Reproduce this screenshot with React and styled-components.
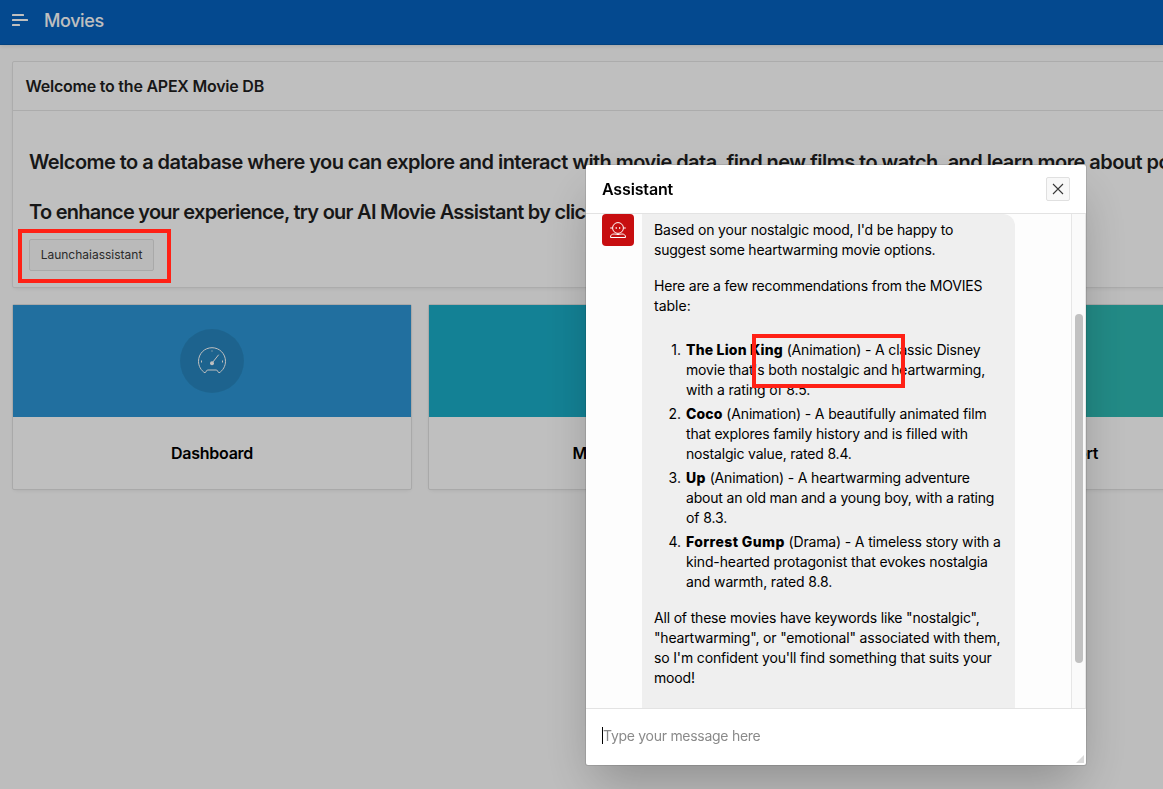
import React from "react";
import styled, { createGlobalStyle } from "styled-components";

const GlobalStyle = createGlobalStyle`
  * { box-sizing: border-box; }
  html, body, #root { height: 100%; }
  body {
    margin: 0;
    overflow: hidden;
    background: #fcfcfc;
    color: #1f1f1f;
    font-family: Inter, "Liberation Sans", sans-serif;
    font-size: 14px;
    line-height: 20px;
  }
  h1, h2, h3, p, ol { margin: 0; padding: 0; font: inherit; }
`;

const Page = styled.div`
  height: 100%;
  overflow: hidden;
`;

const TopBar = styled.header`
  display: flex;
  align-items: center;
  gap: 16px;
  height: 45px;
  padding: 0 12px 4px;
  background: #0662bf;
  border-bottom: 1px solid #0558ab;
  box-shadow: 0 1px 4px rgba(0, 0, 0, 0.12);
  color: #fff;
`;

const AppTitle = styled.h1`
  padding-top: 2px;
  font-size: 18px;
  font-weight: 500;
  letter-spacing: -0.4px;
`;

const Content = styled.main`
  display: flex;
  flex-direction: column;
  gap: 16px;
  width: 1264px;
  padding: 16px 12px;
`;

const Region = styled.section`
  height: 227px;
  border: 1px solid #e6e6e6;
  border-radius: 2px;
  background: #fff;
  box-shadow: 0 2px 4px -2px rgba(0, 0, 0, 0.1);
`;

const RegionHeader = styled.h2`
  height: 49px;
  padding: 0 12.5px;
  border-bottom: 1px solid #e6e6e6;
  font-size: 16px;
  font-weight: 600;
  line-height: 49px;
  letter-spacing: -0.23px;
`;

const RegionBody = styled.div`
  padding: 26px 16px 0;
`;

const Headline = styled.h3`
  font-size: 20px;
  font-weight: 600;
  line-height: 50px;
  white-space: nowrap;
  letter-spacing: ${(p) => p.$tracking}px;
`;

const LaunchButton = styled.button`
  display: block;
  width: 125px;
  height: 32px;
  margin-top: 2px;
  padding: 0 0 2px;
  border: 1px solid #e2e2e2;
  border-radius: 2px;
  background: #f8f8f8;
  color: #383838;
  font: 400 12px Inter, "Liberation Sans", sans-serif;
`;

const Cards = styled.div`
  display: grid;
  grid-template-columns: repeat(3, 400px);
  gap: 16px;
`;

const Card = styled.article`
  border: 1px solid #e2e2e2;
  border-radius: 2px;
  background: #fff;
  box-shadow: 0 2px 4px -2px rgba(0, 0, 0, 0.1);
`;

const CardBanner = styled.div`
  display: grid;
  place-items: center;
  height: 112px;
  background: ${(p) => p.$color};
`;

const IconDisc = styled.div`
  display: grid;
  place-items: center;
  width: 64px;
  height: 64px;
  border-radius: 50%;
  background: rgba(0, 0, 0, 0.1);
  color: #fff;
`;

const CardTitle = styled.h3`
  height: 72px;
  color: #000;
  font-size: 16px;
  font-weight: 600;
  line-height: 72px;
  letter-spacing: -0.25px;
  text-align: center;
`;

const Backdrop = styled.div`
  position: fixed;
  inset: 0;
  background: rgba(0, 0, 0, 0.25);
`;

const Dialog = styled.div`
  position: fixed;
  left: 586px;
  top: 165px;
  display: flex;
  flex-direction: column;
  width: 500px;
  height: 600px;
  border-radius: 2px;
  background: #fff;
  color: #000;
  box-shadow: 0 0 0 1px rgba(0, 0, 0, 0.1), 0 24px 48px -8px rgba(0, 0, 0, 0.25);
`;

const DialogHeader = styled.header`
  display: flex;
  align-items: center;
  justify-content: space-between;
  height: 49px;
  padding: 0 16px;
  border-bottom: 1px solid #e3e3e3;
`;

const DialogTitle = styled.h2`
  font-size: 16px;
  font-weight: 600;
  letter-spacing: -0.15px;
`;

const CloseButton = styled.button`
  display: grid;
  place-items: center;
  width: 24px;
  height: 24px;
  padding: 0;
  border: 1px solid #e0e0e0;
  border-radius: 2px;
  background: #f8f8f8;
  color: #383838;
`;

const Chat = styled.div`
  display: flex;
  height: 494px;
  overflow: hidden;
  background: #fdfdfd;
`;

const Messages = styled.div`
  display: flex;
  flex: 1;
  align-items: flex-start;
  gap: 8px;
  padding-left: 16px;
`;

const Avatar = styled.div`
  display: grid;
  place-items: center;
  width: 32px;
  height: 32px;
  border-radius: 4px;
  background: #c70e10;
  color: #fff;
`;

const Bubble = styled.div`
  display: flex;
  flex-direction: column;
  gap: 16px;
  width: 373px;
  height: 520px;
  padding: 6px 12px;
  border-radius: 0 12px 12px 12px;
  background: #efefef;
`;

const Line = styled.span`
  display: block;
  white-space: pre;
  letter-spacing: ${(p) => p.$tracking || 0}px;
`;

const MovieName = styled.strong`
  font-weight: 800;
  letter-spacing: ${(p) => p.$tracking}px;
`;

const MovieList = styled.ol`
  display: flex;
  flex-direction: column;
  gap: 4px;
  margin: 8px 0 0;
  list-style: none;
`;

const MovieItem = styled.li`
  display: grid;
  grid-template-columns: 27px 1fr;
  column-gap: 5px;
`;

const Ordinal = styled.span`
  text-align: right;
`;

const ScrollTrack = styled.div`
  width: 15px;
  padding: 100px 2px 0 3px;
  border: solid #e6e6e6;
  border-width: 0 1px;
  background: #fafafa;
`;

const ScrollThumb = styled.div`
  width: 8px;
  height: 349px;
  border-radius: 4px;
  background: #c1c1c1;
`;

const Composer = styled.footer`
  display: flex;
  flex: 1;
  align-items: center;
  justify-content: space-between;
  padding: 0 0 3px 16px;
  border-top: 1px solid #e3e3e3;
`;

const Placeholder = styled.span`
  border-left: 1px solid #000;
  color: #8a8a8a;
  line-height: 17px;
  letter-spacing: -0.28px;
`;

const ResizeGrip = styled.svg`
  align-self: flex-end;
  margin: 0 2px -1px 0;
`;

const Highlight = styled.div`
  position: fixed;
  left: ${(p) => p.$x}px;
  top: ${(p) => p.$y}px;
  width: 153px;
  height: 54px;
  border: 4px solid #ff2116;
`;

const MenuIcon = () => (
  <svg width="16" height="12" viewBox="0 0 16 12" fill="currentColor">
    <rect y="0" width="12" height="2" rx=".6" />
    <rect y="5" width="16" height="2" rx=".6" />
    <rect y="10" width="8" height="2" rx=".6" />
  </svg>
);

const GaugeIcon = () => (
  <svg width="28" height="28" viewBox="0 0 28 28" fill="none" stroke="currentColor" strokeWidth="1">
    <path d="M7 25.900C3 23.500.5 19 .5 14.300.5 6.700 6.500.7 14 .7s13.500 6 13.500 13.600c0 4.700-2.500 9.200-6.500 11.600l-2.300-2.900H9.300L7 25.900Z" />
    <path d="M14.500 15.500 20.700 7.700M14 3.500v1M3.500 13.500v2M24.500 13.500v2" />
    <circle cx="14" cy="16.200" r="2" fill="currentColor" stroke="none" />
  </svg>
);

const RobotIcon = () => (
  <svg width="16" height="16" viewBox="0 0 16 16" fill="none" stroke="currentColor" strokeWidth="1">
    <circle cx="8" cy="6" r="5.400" />
    <path d="M2.500 6H.2M13.500 6h2.300M6.200 5v2M9.700 5v2" />
    <path d="M.5 15.500v-.5c0-2 1.500-3 3.400-3 1.200 0 2.200.5 4.100.5s2.900-.5 4.100-.5c1.900 0 3.400 1 3.400 3v.500Z" />
  </svg>
);

const CloseIcon = () => (
  <svg width="12" height="12" viewBox="0 0 12 12" stroke="currentColor" strokeWidth="1.100">
    <path d="m1 1 10 10M11 1 1 11" />
  </svg>
);

const cards = [
  { title: "Dashboard", color: "#2c95d4" },
  { title: "Movies Search", color: "#1aadc7" },
  { title: "Movies Report", color: "#2eb9b3" },
];

const intro = [
  [["Based on your nostalgic mood, I'd be happy to", -0.18], ["suggest some heartwarming movie options.", -0.21]],
  [["Here are a few recommendations from the MOVIES", -0.19], ["table:", 0]],
];

const movies = [
  {
    name: "The Lion King",
    nameTracking: 0.18,
    lines: [
      [" (Animation) - A classic Disney", -0.16],
      ["movie that's both nostalgic and heartwarming,", -0.175],
      ["with a rating of 8.5.", -0.15],
    ],
  },
  {
    name: "Coco",
    nameTracking: 0.1,
    lines: [
      [" (Animation) - A beautifully animated film", -0.145],
      ["that explores family history and is filled with", -0.165],
      ["nostalgic value, rated 8.4.", -0.18],
    ],
  },
  {
    name: "Up",
    nameTracking: 0.4,
    lines: [
      [" (Animation) - A heartwarming adventure", -0.175],
      ["about an old man and a young boy, with a rating", -0.19],
      ["of 8.3.", -0.1],
    ],
  },
  {
    name: "Forrest Gump",
    nameTracking: 0.38,
    lines: [
      [" (Drama) - A timeless story with a", -0.15],
      ["kind-hearted protagonist that evokes nostalgia", -0.14],
      ["and warmth, rated 8.8.", -0.14],
    ],
  },
];

const outro = [
  ['All of these movies have keywords like "nostalgic",', -0.18],
  ['"heartwarming", or "emotional" associated with them,', -0.175],
  ["so I'm confident you'll find something that suits your", -0.155],
  ["mood!", -0.15],
];

const Paragraph = ({ lines }) => (
  <p>
    {lines.map(([text, tracking]) => (
      <Line key={text} $tracking={tracking}>
        {text}
      </Line>
    ))}
  </p>
);

export default function App() {
  return (
    <>
      <GlobalStyle />
      <Page>
        <TopBar>
          <MenuIcon />
          <AppTitle>Movies</AppTitle>
        </TopBar>
        <Content>
          <Region>
            <RegionHeader>Welcome to the APEX Movie DB</RegionHeader>
            <RegionBody>
              <Headline $tracking={-0.55}>
                Welcome to a database where you can explore and interact with movie data, find new films to watch, and
                learn more about popular titles.
              </Headline>
              <Headline $tracking={-0.74}>
                To enhance your experience, try our AI Movie Assistant by clicking the button below.
              </Headline>
              <LaunchButton>Launchaiassistant</LaunchButton>
            </RegionBody>
          </Region>
          <Cards>
            {cards.map((card) => (
              <Card key={card.title}>
                <CardBanner $color={card.color}>
                  <IconDisc>
                    <GaugeIcon />
                  </IconDisc>
                </CardBanner>
                <CardTitle>{card.title}</CardTitle>
              </Card>
            ))}
          </Cards>
        </Content>
      </Page>
      <Backdrop />
      <Dialog role="dialog">
        <DialogHeader>
          <DialogTitle>Assistant</DialogTitle>
          <CloseButton aria-label="Close">
            <CloseIcon />
          </CloseButton>
        </DialogHeader>
        <Chat>
          <Messages>
            <Avatar>
              <RobotIcon />
            </Avatar>
            <Bubble>
              {intro.map((lines) => (
                <Paragraph key={lines[0][0]} lines={lines} />
              ))}
              <MovieList>
                {movies.map((movie, i) => (
                  <MovieItem key={movie.name}>
                    <Ordinal>{i + 1}.</Ordinal>
                    <div>
                      {movie.lines.map(([text, tracking], row) => (
                        <Line key={text} $tracking={tracking}>
                          {row === 0 && <MovieName $tracking={movie.nameTracking}>{movie.name}</MovieName>}
                          {text}
                        </Line>
                      ))}
                    </div>
                  </MovieItem>
                ))}
              </MovieList>
              <Paragraph lines={outro} />
            </Bubble>
          </Messages>
          <ScrollTrack>
            <ScrollThumb />
          </ScrollTrack>
        </Chat>
        <Composer>
          <Placeholder>Type your message here</Placeholder>
          <ResizeGrip width="8" height="8" viewBox="0 0 8 8" fill="#dcdcdc">
            <path d="M8 0v8H0z" />
          </ResizeGrip>
        </Composer>
      </Dialog>
      <Highlight $x={18} $y={229} />
      <Highlight $x={752} $y={334} />
    </>
  );
}
